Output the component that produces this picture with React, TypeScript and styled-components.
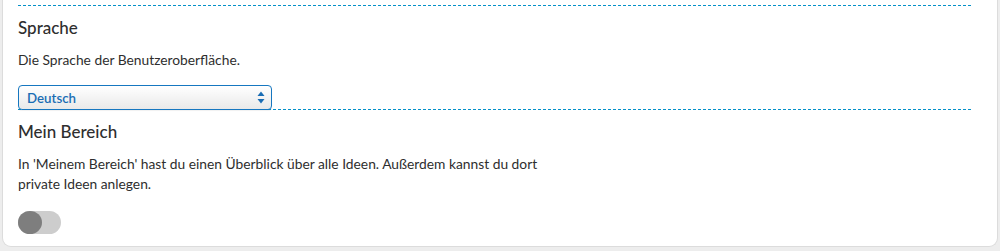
import * as React from 'react';
import styled, { createGlobalStyle } from 'styled-components';

const GlobalStyle = createGlobalStyle`
  html, body {
    margin: 0;
    padding: 0;
    background: #ededed;
  }
  body {
    font-family: Lato, "Liberation Sans", sans-serif;
    color: #2e2e2e;
  }
`;

const dash = 'repeating-linear-gradient(to right, #0590c8 0px, #0590c8 3px, #ffffff 3px, #ffffff 5px)';

const Page = styled.div`
  padding: 0 2px 4px 2px;
`;

const Card = styled.div`
  background: #fff;
  border: 1px solid #dcdcdc;
  border-top: none;
  border-radius: 0 0 9px 9px;
  padding: 5px 26px 12px 15px;
`;

const Section = styled.section<{ last?: boolean }>`
  padding-top: ${props => (props.last ? '12px' : '13px')};
  padding-bottom: ${props => (props.last ? '0' : '1px')};
  background: ${props =>
    props.last ? 'none' : `${dash} top left / 100% 1px no-repeat, ${dash} bottom left / 100% 1px no-repeat`};
`;

const Title = styled.h3`
  margin: 0;
  font-size: 17px;
  font-weight: 500;
  line-height: 20px;
`;

const Description = styled.p<{ width?: number }>`
  margin: 12px 0 0 0;
  font-size: 13.8px;
  line-height: 20px;
  max-width: ${props => props.width || 600}px;
`;

const SelectBox = styled.div`
  position: relative;
  z-index: 1;
  margin: 15px 0 -1px 0;
  width: 238px;
  height: 23px;
  border: 1px solid #1677c0;
  border-radius: 4px;
  background: linear-gradient(#ffffff, #e9e9e9);
  display: flex;
  align-items: center;
  justify-content: space-between;
  padding: 0 6px 0 8px;
  box-sizing: content-box;
  box-shadow: 0 1px 1px rgba(0, 0, 0, 0.06);
`;

const SelectText = styled.span`
  font-size: 13.3px;
  font-weight: 600;
  color: #1a6db4;
`;

const Toggle = styled.div`
  margin-top: 17px;
  width: 43px;
  height: 23px;
  border-radius: 12px;
  background: #cdcdcd;
  display: flex;
  align-items: center;
  filter: blur(0.7px);
`;

const Knob = styled.div`
  width: 24px;
  height: 23px;
  border-radius: 50%;
  background: #7e7e7e;
`;

const Arrows = () => (
  <svg width="8" height="13" viewBox="0 0 8 13">
    <path d="M4 0.5 L7.5 5 L0.5 5 Z" fill="#1a6db4" />
    <path d="M4 12.5 L7.5 8 L0.5 8 Z" fill="#1a6db4" />
  </svg>
);

export default function App() {
  return (
    <Page>
      <GlobalStyle />
      <Card>
        <Section>
          <Title>Sprache</Title>
          <Description>Die Sprache der Benutzeroberfläche.</Description>
          <SelectBox>
            <SelectText>Deutsch</SelectText>
            <Arrows />
          </SelectBox>
        </Section>
        <Section last>
          <Title>Mein Bereich</Title>
          <Description width={540}>
            In 'Meinem Bereich' hast du einen Überblick über alle Ideen. Außerdem kannst du dort private Ideen anlegen.
          </Description>
          <Toggle>
            <Knob />
          </Toggle>
        </Section>
      </Card>
    </Page>
  );
}
